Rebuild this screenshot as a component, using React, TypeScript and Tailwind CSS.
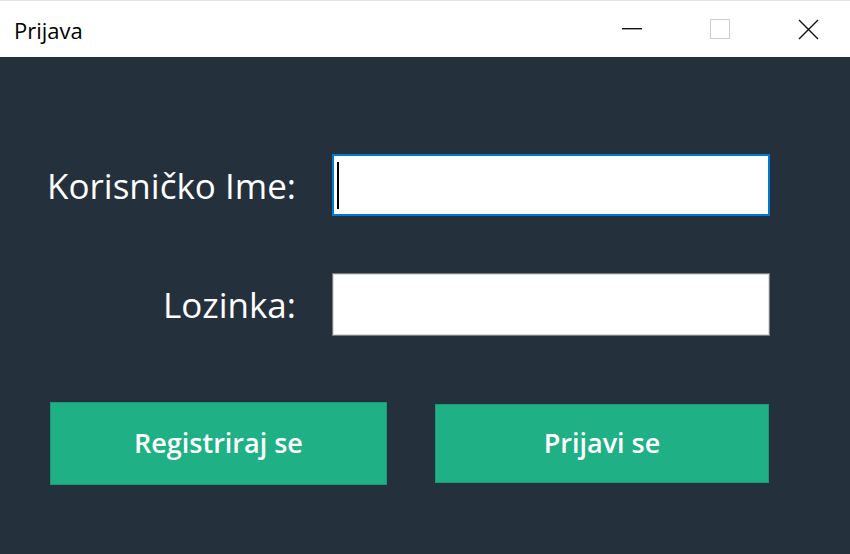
import React from 'react';

const font = { fontFamily: '"Open Sans", "Noto Sans", sans-serif' };

const App = () => {
  return (
    <div className="w-[850px] h-[554px] flex flex-col bg-[#25303d] overflow-hidden" style={font}>
      {/* Title bar */}
      <div className="h-[57px] bg-white border-t border-[#e3e3e3] flex items-center">
        <span className="ml-[14px] mt-[1px] text-[22px] leading-none text-black">Prijava</span>
        <div className="ml-auto flex items-center h-full">
          <div className="w-[88px] h-full flex items-center justify-center">
            <svg width="20" height="2" viewBox="0 0 20 2">
              <rect x="0" y="0" width="20" height="1.4" fill="#111" />
            </svg>
          </div>
          <div className="w-[88px] h-full flex items-center justify-center">
            <svg width="20" height="20" viewBox="0 0 20 20">
              <rect x="0.5" y="0.5" width="19" height="19" fill="none" stroke="#cccccc" strokeWidth="1" />
            </svg>
          </div>
          <div className="w-[88px] h-full flex items-center justify-center mr-[-2px]">
            <svg width="21" height="21" viewBox="0 0 21 21">
              <path d="M1 1 L20 20 M20 1 L1 20" stroke="#111" strokeWidth="1.4" />
            </svg>
          </div>
        </div>
      </div>

      {/* Form */}
      <div className="flex flex-col pt-[97px]">
        <div className="flex items-center h-[62px]">
          <label className="w-[296px] text-right text-white text-[35px] leading-none">Korisničko Ime:</label>
          <div className="ml-[36px] w-[438px] h-full bg-white border-2 border-[#0078d7] flex items-center pl-[3px]">
            <span className="w-[2px] h-[47px] bg-black" />
          </div>
        </div>

        <div className="flex items-center h-[63px] mt-[57px]">
          <label className="w-[296px] text-right text-white text-[35px] leading-none">Lozinka:</label>
          <div className="ml-[36px] w-[438px] h-full bg-white border border-[#7a7a7a] shadow-[inset_0_0_0_1px_#dedede]" />
        </div>

        <div className="flex items-center mt-[66px]">
          <button className="ml-[50px] w-[337px] h-[83px] bg-[#20b086] border border-[#1c9a76] text-white text-[27px] font-semibold">
            Registriraj se
          </button>
          <button className="ml-[48px] w-[334px] h-[79px] bg-[#20b086] border border-[#1c9a76] text-white text-[27px] font-semibold">
            Prijavi se
          </button>
        </div>
      </div>
    </div>
  );
};

export default App;
